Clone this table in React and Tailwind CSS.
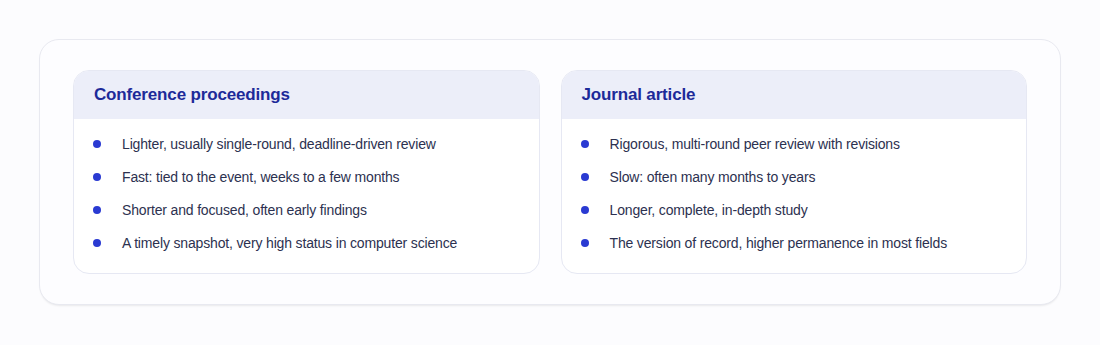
import React from 'react';

const columns = [
    {
        title: 'Conference proceedings',
        items: [
            'Lighter, usually single-round, deadline-driven review',
            'Fast: tied to the event, weeks to a few months',
            'Shorter and focused, often early findings',
            'A timely snapshot, very high status in computer science',
        ],
    },
    {
        title: 'Journal article',
        items: [
            'Rigorous, multi-round peer review with revisions',
            'Slow: often many months to years',
            'Longer, complete, in-depth study',
            'The version of record, higher permanence in most fields',
        ],
    },
];

const Column = ({ title, items }) => (
    <div className="flex-1 rounded-2xl border border-[#e6e8f3] bg-white overflow-hidden">
        <div className="h-[48px] flex items-center px-[20px] bg-[#eceef9]">
            <h3 className="text-[17px] font-bold text-[#1d2a99]">{title}</h3>
        </div>
        <ul className="flex flex-col gap-[11px] pt-[14px] pb-[19px] pl-[19px] pr-4">
            {items.map((item) => (
                <li key={item} className="flex items-center h-[22px] text-[14px] text-[#2c3150]">
                    <span className="w-2 h-2 rounded-full bg-[#2a3ad2] mr-[21px] shrink-0"></span>
                    {item}
                </li>
            ))}
        </ul>
    </div>
);

export default function App() {
    return (
        <div className="min-h-[345px] bg-[#fcfcfe] pt-[39px] px-[39px] tracking-[-0.01em] font-['Liberation_Sans',Arial,sans-serif]">
            <div className="flex gap-[21px] px-[33px] pt-[30px] pb-[30px] rounded-[20px] border border-[#e8e9f0] bg-[#fdfdff] shadow-[0_2px_2px_-1px_rgba(0,0,0,0.08)]">
                {columns.map((col) => (
                    <Column key={col.title} title={col.title} items={col.items} />
                ))}
            </div>
        </div>
    );
}
